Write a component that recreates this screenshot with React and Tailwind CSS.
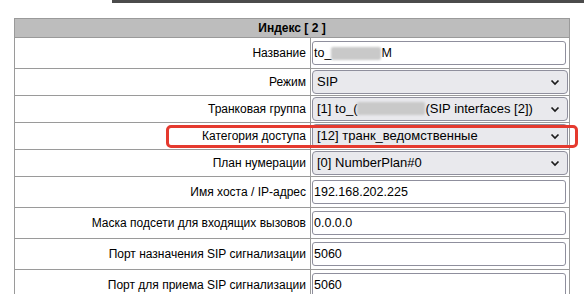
import React from "react";

const FONT = { fontFamily: '"Liberation Sans", Arial, sans-serif' };

// blurred (hidden) piece of a value
const Blur = ({ w }) => (
  <span
    className="inline-block h-[13px] align-[-2px] bg-[#c9c9c9] rounded-[2px] blur-[1px]"
    style={{ width: w }}
  />
);

const Input = ({ children }) => (
  <div className="flex items-center h-[24px] w-[254px] border border-[#8f8f9d] rounded-[3px] bg-white pl-[1px] text-[12.5px] text-black whitespace-nowrap">
    {children}
  </div>
);

const Select = ({ children }) => (
  <div className="flex items-center justify-between h-[24px] w-[256px] border border-[#8f8f9d] rounded-[4px] bg-[#e9e9ed] pl-[4px] pr-[7px] text-[13px] text-black whitespace-nowrap">
    <span>{children}</span>
    <svg width="10" height="7" viewBox="0 0 10 7" fill="none">
      <path d="M1.5 1.5 L5 5 L8.5 1.5" stroke="#1b1b1b" strokeWidth="1.7" />
    </svg>
  </div>
);

const rows = [
  { label: "Название", kind: "input", value: <>to_<Blur w={50} />M</> },
  { label: "Режим", kind: "select", value: "SIP", h: "h-[27px]" },
  {
    label: "Транковая группа",
    kind: "select",
    value: <>[1] to_(<Blur w={68} />(SIP interfaces [2])</>,
  },
  { label: "Категория доступа", kind: "select", value: "[12] транк_ведомственные" },
  { label: "План нумерации", kind: "select", value: "[0] NumberPlan#0" },
  { label: "Имя хоста / IP-адрес", kind: "input", value: "192.168.202.225" },
  { label: "Маска подсети для входящих вызовов", kind: "input", value: "0.0.0.0" },
  { label: "Порт назначения SIP сигнализации", kind: "input", value: "5060" },
  { label: "Порт для приема SIP сигнализации", kind: "input", value: "5060" },
];

export default function App() {
  return (
    <div className="w-[584px] h-[294px] overflow-hidden bg-white" style={FONT}>
      <div className="ml-[112px] h-[3px] bg-[#4b4b4b]" />

      <div className="relative mt-[15px] ml-[14px] w-[556px]">
        <table className="w-full border-collapse border border-[#9a9a9a] text-[12px] text-black">
          <thead>
            <tr className="h-[19px] bg-[#bdbdbd]">
              <th colSpan={2} className="border border-[#9a9a9a] font-bold text-center p-0">
                Индекс [ 2 ]
              </th>
            </tr>
          </thead>
          <tbody>
            {rows.map((r) => (
              <tr
                key={r.label}
                className={r.kind === "input" ? "h-[31px]" : r.h || "h-[27px]"}
              >
                <td className="w-[296px] border border-[#9a9a9a] text-right pr-[4px] py-0">
                  {r.label}
                </td>
                <td className="border border-[#9a9a9a] pl-px py-0">
                  {r.kind === "input" ? (
                    <Input>{r.value}</Input>
                  ) : (
                    <Select>{r.value}</Select>
                  )}
                </td>
              </tr>
            ))}
          </tbody>
        </table>

        {/* red highlight around the access category row */}
        <div className="absolute left-[152px] top-[107px] w-[412px] h-[23px] border-[3px] border-[#e53a2f] rounded-[5px] pointer-events-none" />
      </div>
    </div>
  );
}
